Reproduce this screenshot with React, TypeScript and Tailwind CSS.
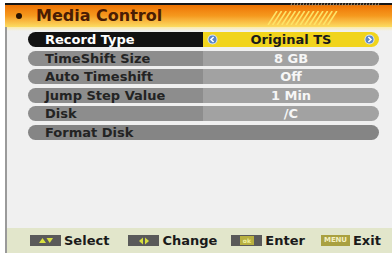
import React from "react";

type Row = { label: string; value?: string };

const rows: Row[] = [
  { label: "TimeShift Size", value: "8 GB" },
  { label: "Auto Timeshift", value: "Off" },
  { label: "Jump Step Value", value: "1 Min" },
  { label: "Disk", value: "/C" },
];

function ArrowBall({ dir }: { dir: "l" | "r" }) {
  return (
    <svg width="11" height="11" viewBox="0 0 11 11">
      <circle cx="5.5" cy="5.5" r="5" fill="#dfe8f5" />
      <circle cx="5.5" cy="5.5" r="4" fill="#5b86c8" />
      <path
        d={dir === "l" ? "M6.6 3 L4 5.5 L6.6 8" : "M4.4 3 L7 5.5 L4.4 8"}
        stroke="#fff"
        strokeWidth="1.6"
        fill="none"
      />
    </svg>
  );
}

function Key({ kind }: { kind: "ud" | "lr" | "ok" | "menu" }) {
  if (kind === "menu") {
    return (
      <div className="w-[29px] h-[11px] bg-[#a9a040] flex items-center justify-center text-[7px] font-bold leading-none text-[#f4f0c0] tracking-tight">
        MENU
      </div>
    );
  }
  return (
    <div className="w-[31px] h-[11px] bg-[#5a5a5a] flex items-center justify-center">
      {kind === "ud" && (
        <svg width="16" height="7" viewBox="0 0 16 7">
          <path d="M1 6 L4.5 1 L8 6 Z" fill="#d8e040" />
          <path d="M8.5 1 L15 1 L11.75 6 Z" fill="#d8e040" />
        </svg>
      )}
      {kind === "lr" && (
        <svg width="12" height="8" viewBox="0 0 12 8">
          <path d="M5 0.5 L1 4 L5 7.5 Z" fill="#d8e040" />
          <path d="M7 0.5 L11 4 L7 7.5 Z" fill="#d8e040" />
        </svg>
      )}
      {kind === "ok" && (
        <div className="w-[14px] h-[9px] bg-[#b8b040] text-[6px] font-bold leading-[9px] text-center text-[#f0f0a0]">
          ok
        </div>
      )}
    </div>
  );
}

export default function App() {
  return (
    <div
      className="w-[392px] h-[253px] bg-white overflow-hidden flex flex-col pt-[3px]"
      style={{ fontFamily: '"DejaVu Sans", "Liberation Sans", sans-serif' }}
    >
      {/* header */}
      <div className="ml-[5px] relative h-[24px] border-t-[2px] border-[#151515] bg-gradient-to-b from-[#ee7200] via-[#f59a1e] to-[#fbdc60] flex items-center">
        <span className="ml-[11px] w-[6px] h-[6px] rounded-full bg-[#2a1200]" />
        <span className="ml-[14px] text-[16px] font-bold text-[#4a1c04] leading-none">Media Control</span>
        {/* diagonal stripes */}
        <svg className="absolute left-[258px] top-[6px]" width="76" height="14" viewBox="0 0 76 14">
          {Array.from({ length: 14 }).map((_, i) => (
            <line key={i} x1={14 + i * 4.6} y1="0" x2={5 + i * 4.6} y2="14" stroke="#fde468" strokeWidth="1.6" />
          ))}
        </svg>
        {/* dashed edge */}
        <svg className="absolute left-[285px] top-[-2px]" width="90" height="3" viewBox="0 0 90 3">
          {Array.from({ length: 30 }).map((_, i) => (
            <path key={i} d={`M${i * 3 + 1.2} 0.3 L${i * 3 + 2.4} 0.3 L${i * 3 + 1.6} 2.7 L${i * 3 + 0.4} 2.7 Z`} fill="#a08a6a" />
          ))}
        </svg>
      </div>

      {/* body */}
      <div className="ml-[5px] flex-1 bg-[#f0f0f0] border-l-[2px] border-[#9a9a9a] flex flex-col">
        <div className="h-[4px] bg-gradient-to-b from-[#fbeaa8] to-[#f0f0f0]" />
        <div className="flex flex-col gap-[3.6px] pl-[21px] pr-[13px] pt-[1px] text-[13px] font-bold leading-none">
          <div className="flex h-[15px]">
            <div className="w-[175px] bg-[#121212] rounded-l-[8px] text-white flex items-center pl-[17px]">Record Type</div>
            <div className="flex-1 bg-[#f1d41c] rounded-r-[8px] flex items-center justify-between px-[4px] text-[#1a1a1a]">
              <ArrowBall dir="l" />
              <span>Original TS</span>
              <ArrowBall dir="r" />
            </div>
          </div>
          {rows.map((r) => (
            <div key={r.label} className="flex h-[15px]">
              <div className="w-[175px] bg-[#8d8d8d] rounded-l-[8px] text-[#232323] flex items-center pl-[17px]">{r.label}</div>
              <div className="flex-1 bg-[#a2a2a2] rounded-r-[8px] flex items-center justify-center text-[#f6f6f6]">{r.value}</div>
            </div>
          ))}
          <div className="flex h-[15px] bg-[#858585] rounded-[8px] text-[#232323] items-center pl-[17px]">Format Disk</div>
        </div>
      </div>

      {/* footer */}
      <div className="ml-[5px] h-[25px] bg-[#e2e6cb] border-l-[2px] border-[#9a9a9a] flex items-center text-[13px] font-bold text-[#1a1a1a] leading-none">
        <div className="ml-[23px] flex items-center gap-[3px]">
          <Key kind="ud" />
          <span>Select</span>
        </div>
        <div className="ml-[19px] flex items-center gap-[3px]">
          <Key kind="lr" />
          <span>Change</span>
        </div>
        <div className="ml-[14px] flex items-center gap-[3px]">
          <Key kind="ok" />
          <span>Enter</span>
        </div>
        <div className="ml-[16px] flex items-center gap-[3px]">
          <Key kind="menu" />
          <span>Exit</span>
        </div>
      </div>
    </div>
  );
}
